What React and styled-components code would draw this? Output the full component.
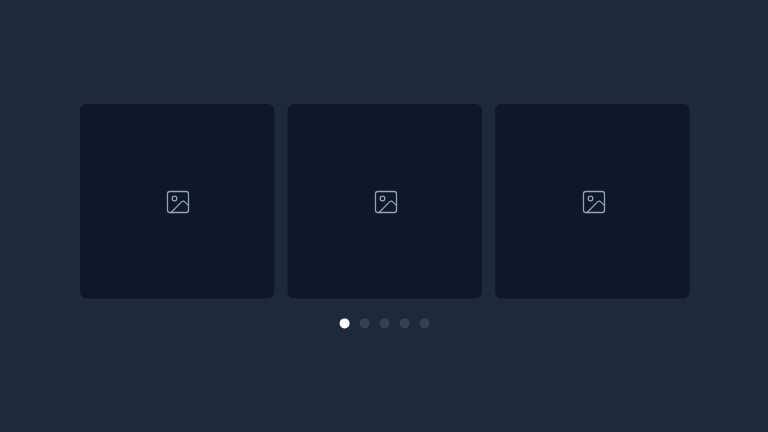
import React from "react";
import styled, { createGlobalStyle } from "styled-components";

const GlobalStyle = createGlobalStyle`
  *, *::before, *::after { box-sizing: border-box; }
  body { margin: 0; background: #1e2a3c; overflow: hidden; }
`;

const Viewport = styled.div`
  width: 768px;
  height: 432px;
  overflow: hidden;
`;

const Page = styled.main`
  width: 1920px;
  height: 1080px;
  padding: 260px 197px 0 200px;
  background: #1e2a3c;
  transform: scale(0.4);
  transform-origin: 0 0;
`;

const Slides = styled.div`
  display: grid;
  grid-template-columns: repeat(3, 485.5px);
  gap: 33.5px;
`;

const Slide = styled.div`
  height: 485.5px;
  padding: ${({ $index }) => `210px 0 0 ${210 + $index}px`};
  border-radius: 16px;
  background: #0f172a;
  color: #94a3b8;
`;

const Icon = styled.svg`
  display: block;
  width: 70px;
  height: 70px;
`;

const Dots = styled.div`
  display: flex;
  justify-content: center;
  gap: 25px;
  margin-top: 50px;
`;

const Dot = styled.button`
  width: 25px;
  height: 25px;
  padding: 0;
  border: 0;
  border-radius: 50%;
  background: ${({ $active }) => ($active ? "#ffffff" : "#334155")};
`;

function ImageIcon() {
  return (
    <Icon viewBox="0 0 24 24" fill="none" stroke="currentColor" strokeWidth="1.1" strokeLinecap="round" strokeLinejoin="round">
      <rect x="3" y="3" width="18" height="18" rx="2" />
      <circle cx="9" cy="9" r="2" />
      <path d="m21 15-3.086-3.086a2 2 0 0 0-2.828 0L6 21" />
    </Icon>
  );
}

export default function App() {
  return (
    <>
      <GlobalStyle />
      <Viewport>
        <Page>
          <Slides>
            {[0, 1, 2].map((i) => (
              <Slide key={i} $index={i}>
                <ImageIcon />
              </Slide>
            ))}
          </Slides>
          <Dots>
            {[0, 1, 2, 3, 4].map((i) => (
              <Dot key={i} $active={i === 0} aria-label={`Slide ${i + 1}`} />
            ))}
          </Dots>
        </Page>
      </Viewport>
    </>
  );
}
